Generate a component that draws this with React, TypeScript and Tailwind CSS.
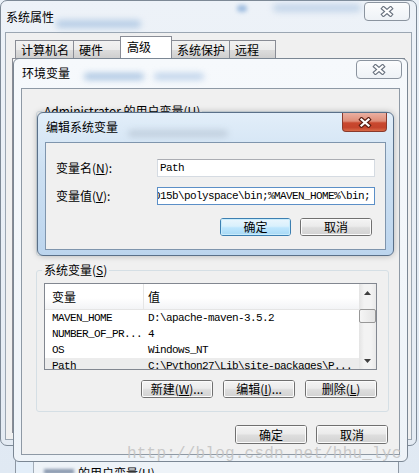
import React from "react";

const MONO = "font-['Liberation_Mono',monospace] text-[11px] tracking-[-0.6px]";

function XGlyph({ active = false }: { active?: boolean }) {
  const outline = active ? "#5a1d12" : "#6b7480";
  return (
    <svg width="14" height="11" viewBox="0 0 14 11" aria-hidden>
      <path d="M3.5 2.5 L10.5 8.5 M10.5 2.5 L3.5 8.5" stroke={outline} strokeWidth="4.4" strokeLinecap="square" fill="none" />
      <path d="M3.5 2.5 L10.5 8.5 M10.5 2.5 L3.5 8.5" stroke="#ffffff" strokeWidth="2.2" strokeLinecap="square" fill="none" />
    </svg>
  );
}

function InactiveClose({ className }: { className: string }) {
  return (
    <div
      className={`flex h-[19px] w-[46px] items-center justify-center rounded-[4px] border border-[#8b949f] bg-[linear-gradient(180deg,#fbfcfd_0%,#eef2f6_100%)] ${className}`}
    >
      <XGlyph />
    </div>
  );
}

function ActiveClose() {
  return (
    <div className="mr-[6px] flex h-[19px] w-[45px] items-center justify-center rounded-b-[4px] border border-t-0 border-[#8a3a2c] bg-[linear-gradient(180deg,#eab0a2_0%,#df8d78_45%,#c9482f_55%,#c4442c_80%,#d86a47_100%)]">
      <XGlyph active />
    </div>
  );
}

function Btn({
  children,
  def = false,
  w,
  h = "h-[18px]",
}: {
  children: React.ReactNode;
  def?: boolean;
  w: string;
  h?: string;
}) {
  return (
    <div className={`${w} ${h} rounded-[3px] border ${def ? "border-[#3c7fb1]" : "border-[#707070]"}`}>
      <div
        className={`flex h-full w-full items-center justify-center rounded-[2px] leading-[14px] ${
          def
            ? "bg-[linear-gradient(180deg,#eaf6fd_0%,#d9f0fc_45%,#bee6fd_55%,#a7d9f5_100%)] shadow-[inset_0_0_0_1px_#c8ecfc]"
            : "bg-[linear-gradient(180deg,#f4f4f4_0%,#ebebeb_45%,#dddddd_55%,#d2d2d2_100%)] shadow-[inset_0_0_0_1px_#fbfbfb]"
        }`}
      >
        {children}
      </div>
    </div>
  );
}

function Tab({ w, children, selected = false, first = false }: { w: string; children: React.ReactNode; selected?: boolean; first?: boolean }) {
  if (selected) {
    return (
      <div className={`${w} relative z-10 -ml-px flex h-[22px] items-start border border-b-0 border-[#898c95] bg-white pl-[6px] pt-[3px] leading-[14px]`}>
        {children}
      </div>
    );
  }
  return (
    <div
      className={`${w} ${first ? "" : "-ml-px"} flex h-[18px] items-center border border-b-0 border-[#898c95] bg-[linear-gradient(180deg,#f2f2f2_0%,#ebebeb_50%,#dddddd_51%,#cfcfcf_100%)] pl-[5px] leading-[14px]`}
    >
      {children}
    </div>
  );
}

function UpArrow() {
  return (
    <svg width="7" height="4" viewBox="0 0 7 4" aria-hidden>
      <path d="M0 4 L3.5 0 L7 4 Z" fill="#3f3f3f" />
    </svg>
  );
}
function DownArrow() {
  return (
    <svg width="7" height="4" viewBox="0 0 7 4" aria-hidden>
      <path d="M0 0 L3.5 4 L7 0 Z" fill="#3f3f3f" />
    </svg>
  );
}

const rows = [
  { k: "MAVEN_HOME", v: "D:\\apache-maven-3.5.2", sel: false },
  { k: "NUMBER_OF_PR...", v: "4", sel: false },
  { k: "OS", v: "Windows_NT", sel: false },
  { k: "Path", v: "C:\\Python27\\Lib\\site-packages\\P...", sel: true },
];

export default function App() {
  return (
    <div className="relative h-[473px] w-[419px] overflow-hidden bg-[linear-gradient(180deg,#eaf1f8,#e0e9f3)] font-['Noto_Sans_CJK_SC',sans-serif] text-[12px] text-black">
      {/* 系统属性 */}
      <div className="absolute left-0 top-0 flex h-[446px] w-[417px] flex-col rounded-[7px] border border-[#7d8996] bg-[linear-gradient(180deg,#edf2f8_0%,#e4ebf3_100%)]">
        <div className="relative flex h-[31px] items-start justify-between">
          <div className="absolute left-[55px] top-[19px] h-[8px] w-[85px] rounded-full bg-[#93b5da] opacity-60 blur-[3px]" />
          <div className="absolute left-[272px] top-[3px] h-[8px] w-[88px] rounded-full bg-[#a9c3e0] opacity-60 blur-[3px]" />
          <div className="absolute left-[236px] top-[4px] h-[7px] w-[10px] rounded-full bg-[#6b9ad0] opacity-60 blur-[2px]" />
          <span className="relative pl-[5px] pt-[9px] leading-[14px]">系统属性</span>
          <InactiveClose className="relative mr-[6px] mt-[1px]" />
        </div>
        <div className="mx-[4px] mb-[5px] flex flex-1 flex-col border border-[#9ba6b2] bg-[#f0f0f0]">
          <div className="flex h-[25px] items-end pl-[9px]">
            <Tab w="w-[59px]" first>计算机名</Tab>
            <Tab w="w-[48px]">硬件</Tab>
            <Tab w="w-[52px]" selected>高级</Tab>
            <Tab w="w-[59px]">系统保护</Tab>
            <Tab w="w-[47px]">远程</Tab>
          </div>
          <div className="mx-[6px] mb-[6px] flex-1 border border-[#898c95] bg-[#fafafa]" />
        </div>
      </div>

      {/* window underneath, visible at the bottom */}
      <div className="absolute left-[15px] top-[450px] h-[30px] w-[384px] border-x border-[#8d97a3] bg-[#e3eef9]">
        <div className="ml-[17px] flex h-full items-start border-l border-[#a3adb8] bg-[#eef3f8] pl-[10px] pt-[16px]">
          <span className="mr-[4px] mt-[3px] h-[5px] w-[30px] bg-[#4a5f80] opacity-60 blur-[1.5px]" />
          <span className="leading-[14px]">的用户变量(U)</span>
        </div>
      </div>

      {/* 环境变量 */}
      <div className="absolute left-[13px] top-[58px] flex h-[404px] w-[395px] flex-col rounded-[6px] border border-[#7b8794] bg-[linear-gradient(180deg,#f6f9fc_0%,#eef3f8_100%)]">
        <div className="relative flex h-[29px] items-start justify-between">
          <div className="absolute left-[70px] top-[14px] h-[7px] w-[60px] rounded-full bg-[#8fb2d8] opacity-70 blur-[3px]" />
          <div className="absolute left-[140px] top-[14px] h-[7px] w-[50px] rounded-full bg-[#9dbce0] opacity-60 blur-[3px]" />
          <span className="relative pl-[8px] pt-[7px] leading-[14px]">环境变量</span>
          <InactiveClose className="relative mr-[5px] mt-[1px]" />
        </div>
        <div className="mx-[7px] mb-[6px] flex flex-1 flex-col border border-[#8e99a5] bg-[#f0f0f0] pl-[14px] pr-[10px]">
          <fieldset className="mt-[15px] h-[152px] rounded-[3px] border border-[#d5dfe5]">
            <legend className="ml-[5px] px-[2px] leading-[14px]">
              Administrator 的用户变量(<span className="underline">U</span>)
            </legend>
          </fieldset>

          <fieldset className="mt-[7px] flex flex-col rounded-[3px] border border-[#d5dfe5] pb-[13px]">
            <legend className="ml-[5px] px-[2px] leading-[14px]">
              系统变量(<span className="underline">S</span>)
            </legend>
            <div className="ml-[7px] mr-[11px] mt-[6px] flex h-[87px] border border-[#828790] bg-white">
              <div className="flex min-w-0 flex-1 flex-col overflow-hidden">
                <div className="flex h-[26px] shrink-0 items-center border-b border-[#e5e5e5] bg-[linear-gradient(180deg,#ffffff_0%,#ffffff_55%,#f3f4f6_100%)]">
                  <div className="flex h-full w-[99px] items-center border-r border-[#e5e5e5] pl-[7px] leading-[14px]">变量</div>
                  <div className="pl-[4px] leading-[14px]">值</div>
                </div>
                {rows.map((r) => (
                  <div
                    key={r.k}
                    className={`flex h-[16px] shrink-0 items-center whitespace-nowrap leading-[16px] ${MONO} ${r.sel ? "bg-[#ececec]" : ""}`}
                  >
                    <div className="w-[99px] shrink-0 overflow-hidden pl-[7px]">{r.k}</div>
                    <div className="pl-[4px]">{r.v}</div>
                  </div>
                ))}
              </div>
              <div className="flex w-[17px] shrink-0 flex-col bg-[linear-gradient(90deg,#e4e4e4,#f3f3f3_30%,#f3f3f3_70%,#e9e9e9)]">
                <div className="flex h-[17px] shrink-0 items-center justify-center">
                  <UpArrow />
                </div>
                <div className="h-[8px] shrink-0" />
                <div className="h-[14px] shrink-0 rounded-[2px] border border-[#979797] bg-[linear-gradient(90deg,#f5f5f5,#e4e4e4)]" />
                <div className="flex-1" />
                <div className="flex h-[17px] shrink-0 items-center justify-center">
                  <DownArrow />
                </div>
              </div>
            </div>
            <div className="mr-[11px] mt-[10px] flex justify-end gap-[10px]">
              <Btn w="w-[72px]">
                新建(<span className="underline">W</span>)...
              </Btn>
              <Btn w="w-[72px]">
                编辑(<span className="underline">I</span>)...
              </Btn>
              <Btn w="w-[72px]">
                删除(<span className="underline">L</span>)
              </Btn>
            </div>
          </fieldset>

          <div className="mr-[1px] mt-[13px] flex justify-end gap-[9px]">
            <Btn w="w-[72px]" h="h-[19px]">确定</Btn>
            <Btn w="w-[72px]" h="h-[19px]">取消</Btn>
          </div>
        </div>
      </div>

      {/* 编辑系统变量 */}
      <div className="absolute left-[37px] top-[112px] flex h-[144px] w-[357px] flex-col rounded-[6px] border border-[#5a7089] bg-[linear-gradient(180deg,#e2eef9_0%,#cde0f2_40%,#bcd5ee_100%)] shadow-[0_0_6px_rgba(0,0,0,0.25)]">
        <div className="relative flex h-[29px] items-start justify-between">
          <div className="absolute left-[90px] top-[17px] h-[7px] w-[100px] rounded-full bg-[#9aa8b8] opacity-40 blur-[3px]" />
          <span className="relative pl-[8px] pt-[7px] leading-[14px]">编辑系统变量</span>
          <ActiveClose />
        </div>
        <div className="mx-[7px] mb-[5px] flex flex-1 flex-col border border-[#7f95ad] bg-[#f0f0f0] px-[10px] pt-[16px]">
          <div className="flex h-[18px] items-center">
            <span className="flex-1 leading-[14px]">
              变量名(<span className="underline">N</span>):
            </span>
            <div className={`flex h-[18px] w-[218px] items-center border border-[#d5dbe2] border-t-[#abadb3] bg-white pl-[2px] leading-[16px] ${MONO}`}>
              Path
            </div>
          </div>
          <div className="mt-[10px] flex h-[18px] items-center">
            <span className="flex-1 leading-[14px]">
              变量值(<span className="underline">V</span>):
            </span>
            <div className={`flex h-[18px] w-[218px] items-center justify-end overflow-hidden whitespace-nowrap border border-[#5b8fc7] bg-white pr-[4px] leading-[16px] ${MONO}`}>
              <span className="shrink-0">C:\Program Files\MATLAB\R2015b\polyspace\bin;%MAVEN_HOME%\bin;</span>
            </div>
          </div>
          <div className="mt-[13px] flex justify-end gap-[9px] pr-[3px]">
            <Btn w="w-[71px]" def>确定</Btn>
            <Btn w="w-[72px]">取消</Btn>
          </div>
        </div>
      </div>

      {/* watermark */}
      <div className="pointer-events-none absolute left-[127px] top-[446px] whitespace-nowrap font-['Liberation_Mono',monospace] text-[16px] leading-[16px] tracking-[0.2px] text-[#c3c3c3]/90">
        http://blog.csdn.net/hhu_lyc
      </div>
    </div>
  );
}
